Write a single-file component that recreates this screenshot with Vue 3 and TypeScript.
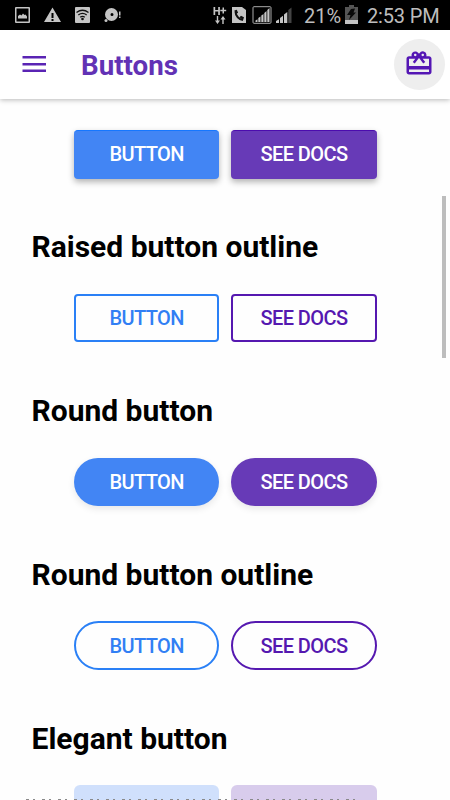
<script setup lang="ts">
interface Section {
  title: string
  variant: string
  labels: [string, string]
}

const sections: Section[] = [
  { title: 'Raised button outline', variant: 'outline', labels: ['BUTTON', 'SEE DOCS'] },
  { title: 'Round button', variant: 'round', labels: ['BUTTON', 'SEE DOCS'] },
  { title: 'Round button outline', variant: 'round outline', labels: ['BUTTON', 'SEE DOCS'] },
  { title: 'Elegant button', variant: 'elegant', labels: ['', ''] },
]
</script>

<template>
  <div class="screen">
    <div class="status">
      <svg class="notices" width="124" height="30" viewBox="0 0 124 30" fill="#c4c4c4">
        <path fill-rule="evenodd" d="M16 7h13a1 1 0 0 1 1 1v14a1 1 0 0 1-1 1H16a1 1 0 0 1-1-1V8a1 1 0 0 1 1-1zm.5 1.5v13h12v-13z" />
        <path d="M18 18.500v-2.500l2-1.500 1.500 1L23 13.500l1.500 1.500 1-.5 1.500 2v2z" />
        <path fill-rule="evenodd" d="M52.500 7.500 61 22H44zM51.500 13v5h2v-5zm0 6v2h2v-2z" />
        <rect x="75" y="7" width="15" height="16" rx="1" />
        <g fill="none" stroke="#111" stroke-width="1.400">
          <path d="M76.500 12.500q6-4.500 12 0M78.300 15q4.200-3.200 8.400 0M80.200 17.300q2.300-1.800 4.600 0" />
        </g>
        <circle cx="82.500" cy="19" r="1.300" fill="#111" />
        <path fill-rule="evenodd" d="M111.500 8a6.500 6.500 0 1 1 0 13 6.500 6.500 0 0 1 0-13zm.5 5a1.500 1.500 0 1 0 0 3 1.500 1.500 0 0 0 0-3z" />
        <circle cx="106" cy="20.500" r="1.500" />
        <path d="M119 11.500h1.500v4H119zM119 16.500h1.500V18H119z" />
      </svg>
      <svg class="signals" width="84" height="30" viewBox="212 0 84 30" fill="#c4c4c4">
        <path d="M213.500 7h1.700v3h3V7h1.700v8h-1.700v-3.500h-3V15h-1.700zM222.500 7.500h1.500v2.300h2.200v1.500H224v2.300h-1.500v-2.300h-2.200V9.800h2.200z" />
        <path d="M216.800 16h1.400v4.500h1.800L217.500 24 215 20.500h1.800zM222.300 24v-4.500h-1.800l2.500-3.500 2.500 3.500h-1.800V24z" />
        <path d="M232 7h10l4 3v13h-14z" />
        <path fill="none" stroke="#111" stroke-width="2" d="M235.500 11.500c0 4.500 3.500 8 7.500 8.500" />
        <path fill="#111" d="M234.300 10.500l2.500-.8 1.300 3-2 1.300zM239.500 17.300l1.500-1.600 3 1.600-1 3z" />
        <rect x="253" y="6.700" width="18" height="16.600" rx="1" fill="none" stroke="#aaa" />
        <path d="M255.500 22v-1.500l2-1.200V22zM258.300 22v-4l2.200-1.500V22zM261.300 22v-6.500l2.200-1.500v8zM264.300 22v-9l2.200-2v11zM267.300 22V10l2.200-2v14z" />
        <path d="M276 23v-2l3-1.800V23zM280 23v-5l3-2.200V23zM284 23v-8.500l3.300-2.500V23z" />
        <path fill="#444" d="M288.300 23V10l3.200-2.500V23z" />
      </svg>
      <span class="percent">21%</span>
      <svg class="battery" width="13" height="20" viewBox="0 0 13 20">
        <path fill="#555" d="M4 0h5v2h4v13H0V2h4z" />
        <path fill="#c4c4c4" d="M0 15h13v4H0z" />
        <path fill="#090909" d="M6 4l4-.5-1.500 4H11L4 15l1.500-5H2z" />
      </svg>
      <span class="clock">2:53 PM</span>
    </div>

    <header class="bar">
      <svg class="menu" width="24" height="18" viewBox="0 0 24 18" fill="#5a24b4">
        <path d="M.5 1h23.500v2.500H.5zM.5 7.900h23.500v2.500H.5zM.5 14.600h23.500v2.500H.5z" />
      </svg>
      <h1>Buttons</h1>
      <button class="gift" aria-label="Gift">
        <svg width="30" height="29" viewBox="0 0 24 24" preserveAspectRatio="none" fill="#5416b4">
          <path d="M20 6h-2.180c.110-.310.180-.650.180-1a2.996 2.996 0 0 0-5.500-1.650l-.5.670-.5-.680C10.960 2.540 10.050 2 9 2 7.340 2 6 3.340 6 5c0 .350.070.690.180 1H4c-1.110 0-1.990.890-1.990 2L2 19c0 1.110.890 2 2 2h16c1.110 0 2-.890 2-2V8c0-1.110-.890-2-2-2zm-5-2c.550 0 1 .450 1 1s-.450 1-1 1-1-.450-1-1 .450-1 1-1zM9 4c.550 0 1 .450 1 1s-.450 1-1 1-1-.450-1-1 .450-1 1-1zm11 15H4v-2h16v2zm0-5H4V8h5.080L7 10.830 8.620 12 11 8.760l1-1.360 1 1.360L15.380 12 17 10.830 14.920 8H20v6z" />
        </svg>
      </button>
    </header>

    <main class="content">
      <div class="row raised">
        <button class="btn blue">BUTTON</button>
        <button class="btn purple">SEE DOCS</button>
      </div>
      <section v-for="section in sections" :key="section.title">
        <h2>{{ section.title }}</h2>
        <div class="row" :class="section.variant">
          <button class="btn blue">{{ section.labels[0] }}</button>
          <button class="btn purple">{{ section.labels[1] }}</button>
        </div>
      </section>
    </main>

    <div class="scrollbar"></div>
    <div class="edge"></div>
  </div>
</template>

<style>
body {
  background: #fff;
  overflow: hidden;
}
</style>

<style scoped>
.screen {
  position: relative;
  display: flex;
  flex-direction: column;
  width: 450px;
  height: 800px;
  overflow: hidden;
  background: #fefefe;
  font-family: Roboto, sans-serif;
}
.status {
  display: flex;
  flex: none;
  align-items: center;
  height: 30px;
  background: #000;
  color: #bdbdbd;
  font-size: 20px;
  line-height: 30px;
  white-space: nowrap;
}
.signals {
  margin-left: 88px;
}
.percent {
  width: 41px;
  margin-left: 8px;
  padding-top: 1px;
}
.clock {
  margin-left: 9px;
  padding-top: 1px;
  letter-spacing: -0.15px;
}
.bar {
  z-index: 1;
  display: flex;
  flex: none;
  align-items: center;
  height: 69px;
  padding: 0 5.500px 0 22px;
  box-sizing: border-box;
  background: #fff;
  box-shadow: 0 1px 5px rgba(0, 0, 0, 0.28);
}
.menu {
  margin-bottom: 2px;
}
h1 {
  flex: 1;
  margin: 2px 0 0 35px;
  color: #6232b5;
  font-size: 27.700px;
  font-weight: 700;
  line-height: 34px;
}
.gift {
  display: flex;
  align-items: center;
  justify-content: center;
  width: 51px;
  height: 51px;
  padding: 0 0 3px;
  border: 0;
  border-radius: 50%;
  box-sizing: border-box;
  background: #eee;
}
.content {
  flex: none;
  padding-top: 31px;
}
.row {
  display: flex;
  gap: 12px;
  padding-left: 73.800px;
}
.btn {
  box-sizing: border-box;
  width: 145.500px;
  height: 48.500px;
  padding: 0;
  border: 0;
  border-radius: 4px;
  color: #fff;
  font-family: Roboto, sans-serif;
  font-size: 20px;
  font-weight: 500;
  line-height: 46px;
  letter-spacing: -0.6px;
}
.blue {
  background: #4285f4;
}
.purple {
  background: #673ab7;
}
.raised .btn {
  padding-bottom: 2px;
  box-shadow: 0 3px 6px rgba(0, 0, 0, 0.3);
}
.raised .blue {
  border-top: 1px solid #1677ff;
}
.raised .purple {
  border-top: 1px solid #4c0cae;
}
.round .btn {
  border-radius: 25px;
  box-shadow: 0 3px 7px rgba(0, 0, 0, 0.09);
}
.outline .btn {
  border: 2px solid;
  background: transparent;
  box-shadow: none;
  line-height: 44px;
}
.outline .blue {
  border-color: #2a80f6;
  color: #317ff4;
}
.outline .purple {
  border-color: #5518b0;
  color: #5518b0;
}
.elegant .btn {
  border-radius: 6px;
}
.elegant .blue {
  background: #d0e0fc;
}
.elegant .purple {
  background: #d8ccec;
}
h2 {
  height: 36px;
  margin: 0;
  padding: 50.700px 0 28.600px 31.500px;
  color: #000;
  font-size: 30px;
  font-weight: 700;
  line-height: 36px;
  white-space: nowrap;
}
.scrollbar {
  position: absolute;
  top: 196px;
  right: 4px;
  width: 4px;
  height: 162px;
  background: #bdbdbd;
}
.edge {
  position: absolute;
  bottom: 0;
  left: 26px;
  width: 332px;
  height: 1px;
  background: repeating-linear-gradient(90deg, #8a8a8a 0 3px, transparent 3px 7px, #8a8a8a 7px 9px, transparent 9px 16px);
}
</style>
